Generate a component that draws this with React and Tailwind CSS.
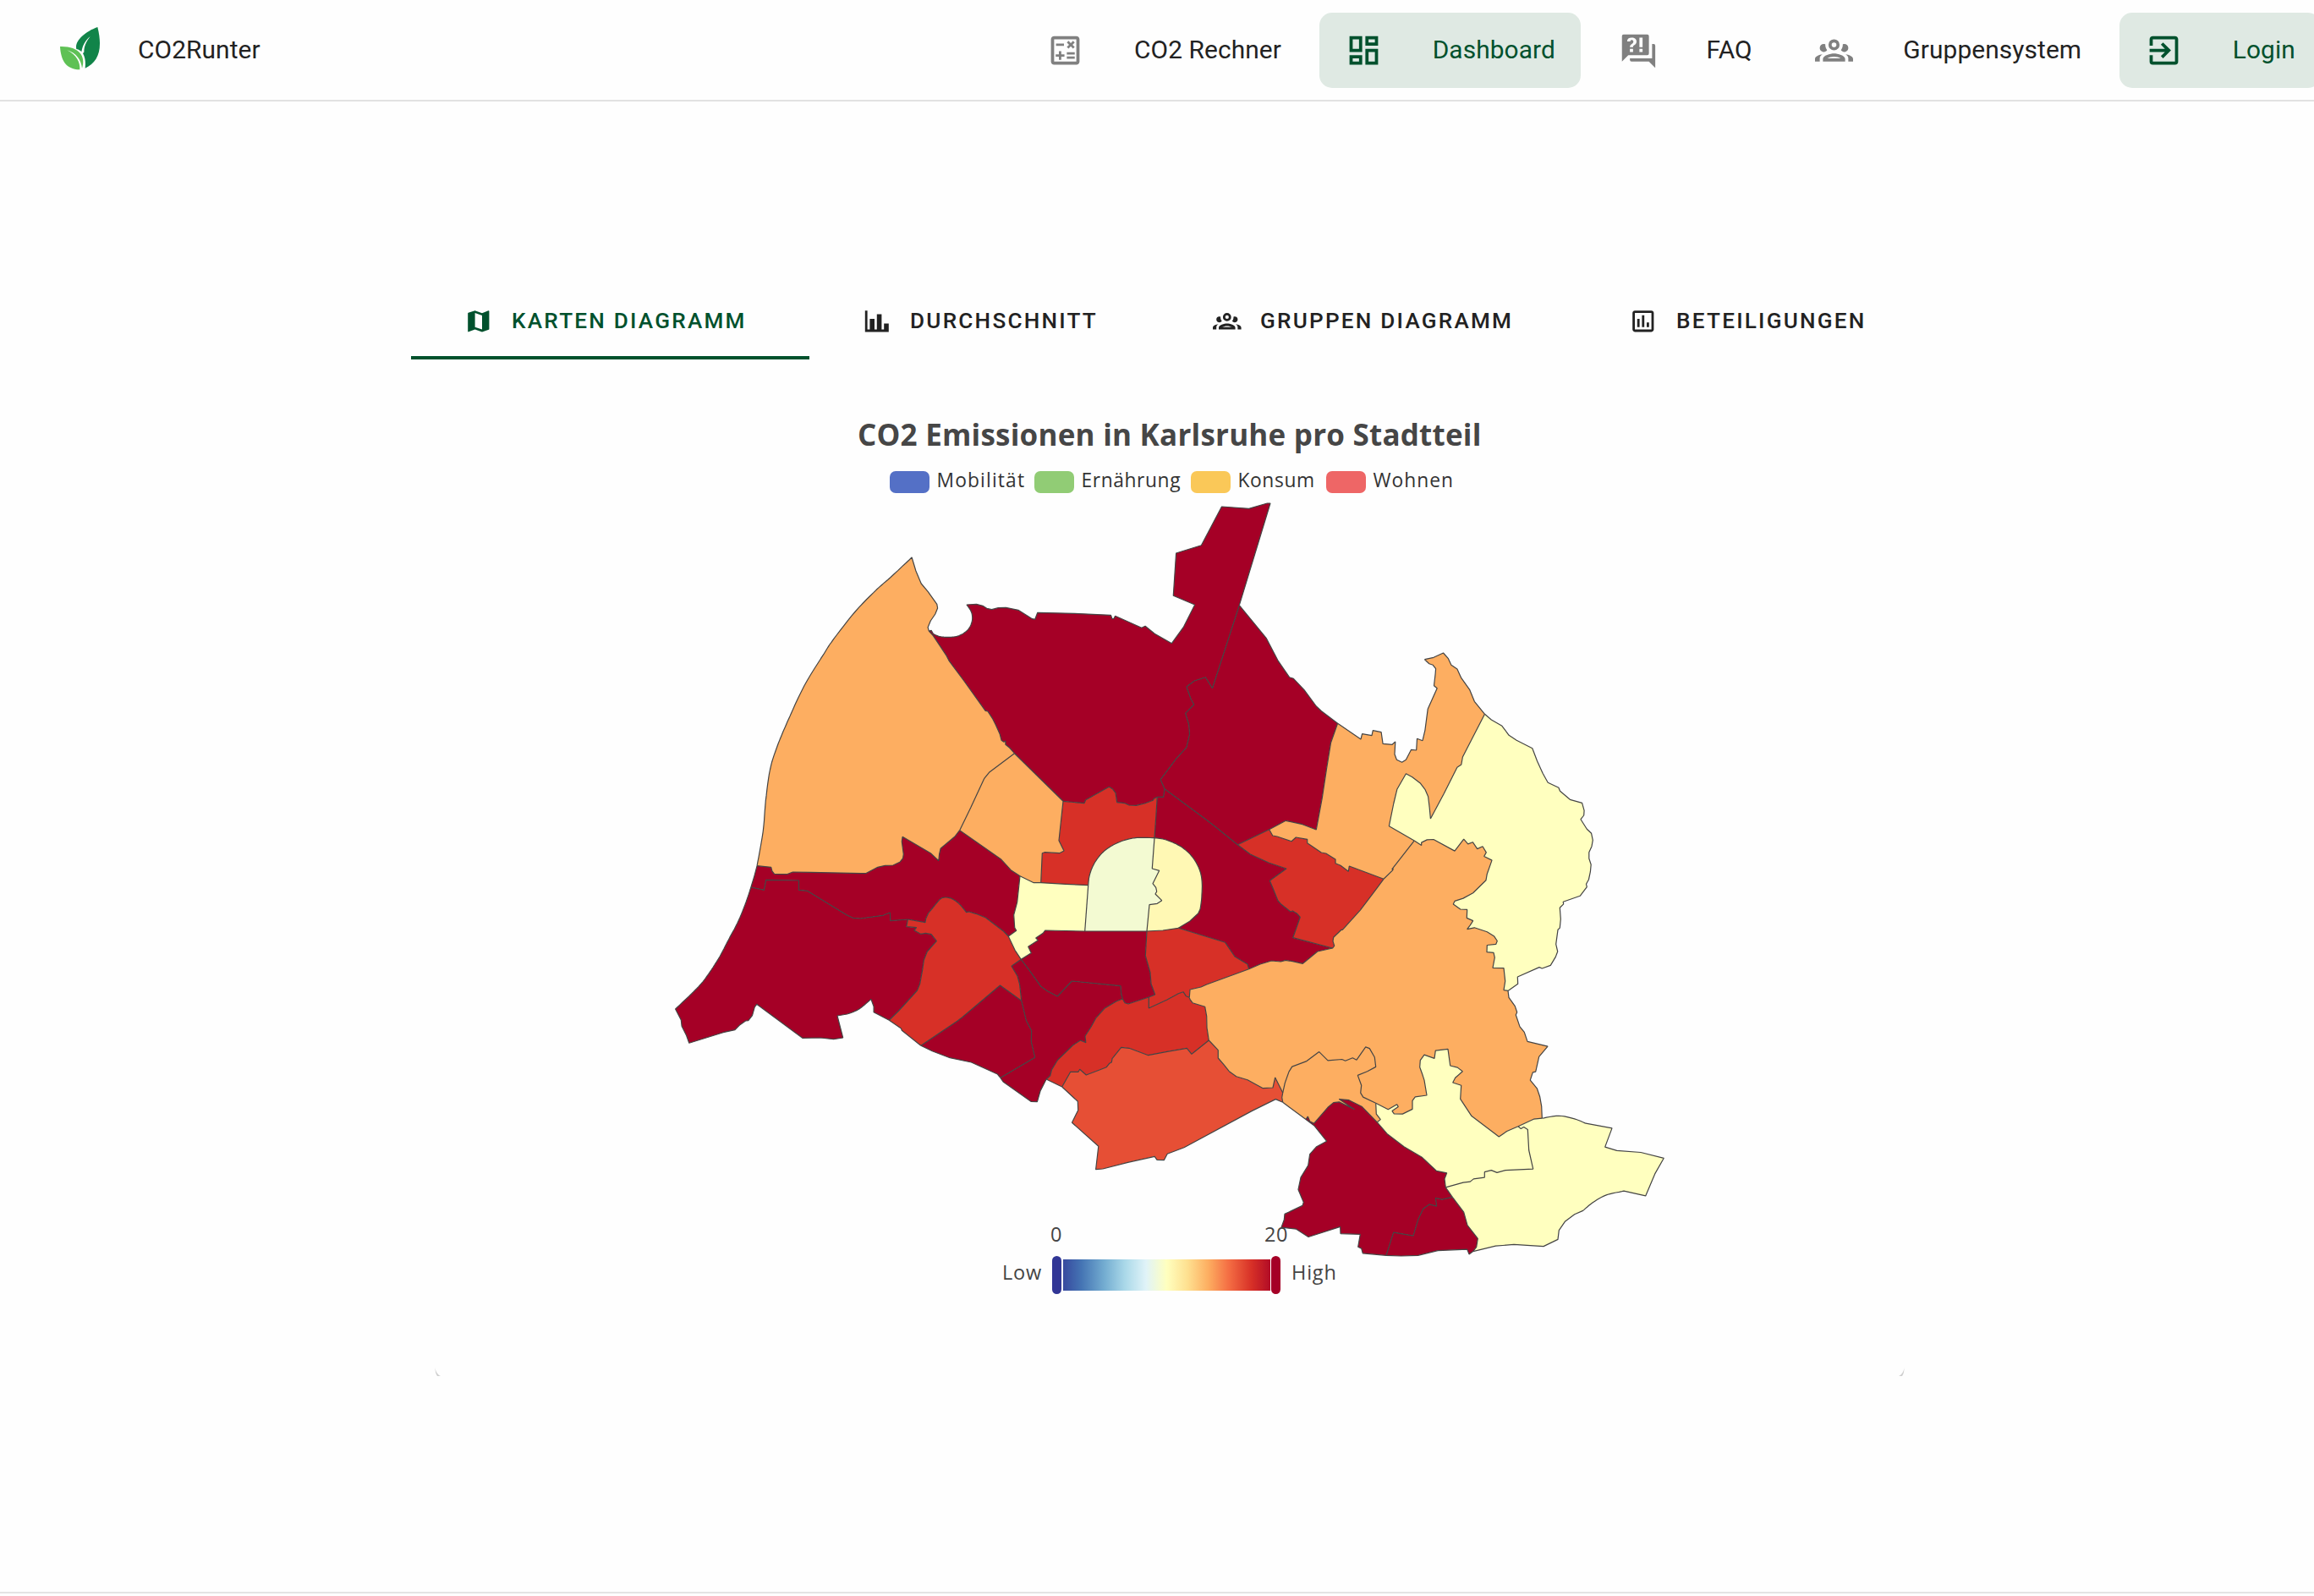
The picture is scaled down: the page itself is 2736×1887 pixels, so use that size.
import React from "react";

const ICONS = {
  calculator:
    "M19,3H5C3.9,3 3,3.9 3,5V19C3,20.1 3.9,21 5,21H19C20.1,21 21,20.1 21,19V5C21,3.9 20.1,3 19,3M19,19H5V5H19V19M6.2,7.7H11.2V9.2H6.2V7.7M13,15.8H18V17.3H13V15.8M13,13.2H18V14.7H13V13.2M8,18H9.5V16H11.5V14.5H9.5V12.5H8V14.5H6V16H8V18M14.1,10.9L15.5,9.5L16.9,10.9L18,9.9L16.6,8.5L18,7.1L16.9,6L15.5,7.4L14.1,6L13,7.1L14.4,8.5L13,9.9L14.1,10.9Z",
  dashboard:
    "M19,5V7H15V5H19M9,5V11H5V5H9M19,13V19H15V13H19M9,17V19H5V17H9M21,3H13V9H21V3M11,3H3V13H11V3M21,11H13V21H21V11M11,15H3V21H11V15Z",
  faq: "M18,15H6L2,19V3A1,1 0 0,1 3,2H18A1,1 0 0,1 19,3V14A1,1 0 0,1 18,15M23,9V23L19,19H8A1,1 0 0,1 7,18V17H21V8H22A1,1 0 0,1 23,9M8.19,4C7.32,4 6.62,4.2 6.08,4.59C5.56,5 5.3,5.57 5.31,6.36L5.32,6.39H7.25C7.26,6.09 7.35,5.86 7.53,5.7C7.71,5.55 7.93,5.47 8.19,5.47C8.5,5.47 8.76,5.57 8.94,5.75C9.12,5.94 9.2,6.2 9.2,6.5C9.2,6.82 9.13,7.09 8.97,7.32C8.83,7.55 8.62,7.75 8.36,7.91C7.85,8.25 7.5,8.55 7.31,8.82C7.11,9.08 7,9.5 7,10H9C9,9.69 9.04,9.44 9.13,9.26C9.22,9.08 9.39,8.9 9.64,8.74C10.09,8.5 10.46,8.21 10.75,7.81C11.04,7.41 11.19,7 11.19,6.5C11.19,5.74 10.92,5.13 10.38,4.68C9.85,4.23 9.12,4 8.19,4M7,11V13H9V11H7M13,13H15V11H13V13M13,4V10H15V4H13Z",
  group:
    "M12,5A3.5,3.5 0 0,0 8.5,8.5A3.5,3.5 0 0,0 12,12A3.5,3.5 0 0,0 15.5,8.5A3.5,3.5 0 0,0 12,5M12,7A1.5,1.5 0 0,1 13.5,8.5A1.5,1.5 0 0,1 12,10A1.5,1.5 0 0,1 10.5,8.5A1.5,1.5 0 0,1 12,7M5.5,8A2.5,2.5 0 0,0 3,10.5C3,11.44 3.53,12.25 4.29,12.68C4.65,12.88 5.06,13 5.5,13C5.94,13 6.35,12.88 6.71,12.68C7.08,12.47 7.39,12.17 7.62,11.81C6.89,10.86 6.5,9.7 6.5,8.5C6.5,8.41 6.5,8.31 6.5,8.22C6.2,8.08 5.86,8 5.5,8M18.5,8C18.14,8 17.8,8.08 17.5,8.22C17.5,8.31 17.5,8.41 17.5,8.5C17.5,9.7 17.11,10.86 16.38,11.81C16.5,12 16.63,12.15 16.78,12.3C16.94,12.45 17.1,12.58 17.29,12.68C17.65,12.88 18.06,13 18.5,13C18.94,13 19.35,12.88 19.71,12.68C20.47,12.25 21,11.44 21,10.5A2.5,2.5 0 0,0 18.5,8M12,14C9.66,14 5,15.17 5,17.5V19H19V17.5C19,15.17 14.34,14 12,14M4.71,14.55C2.78,14.78 0,15.76 0,17.5V19H3V17.07C3,16.06 3.69,15.22 4.71,14.55M19.29,14.55C20.31,15.22 21,16.06 21,17.07V19H24V17.5C24,15.76 21.22,14.78 19.29,14.55M12,16C13.53,16 15.24,16.5 16.23,17H7.77C8.76,16.5 10.47,16 12,16Z",
  login:
    "M19,3H5C3.89,3 3,3.89 3,5V9H5V5H19V19H5V15H3V19A2,2 0 0,0 5,21H19A2,2 0 0,0 21,19V5C21,3.89 20.1,3 19,3M10.08,15.58L11.5,17L16.5,12L11.5,7L10.08,8.41L12.67,11H3V13H12.67L10.08,15.58Z",
  map: "M15,19L9,16.89V5L15,7.11M20.5,3C20.44,3 20.39,3 20.34,3L15,5.1L9,3L3.36,4.9C3.15,4.97 3,5.15 3,5.38V20.5A0.5,0.5 0 0,0 3.5,21C3.55,21 3.61,21 3.66,20.97L9,18.9L15,21L20.64,19.1C20.85,19 21,18.85 21,18.62V3.5A0.5,0.5 0 0,0 20.5,3Z",
  bars: "M22,21H2V3H4V19H6V10H10V19H12V6H16V19H18V14H22V21Z",
  poll: "M9 17H7V10H9V17M13 17H11V7H13V17M17 17H15V13H17V17M19 19H5V5H19V19.1M19 3H5C3.9 3 3 3.9 3 5V19C3 20.1 3.9 21 5 21H19C20.1 21 21 20.1 21 19V5C21 3.9 20.1 3 19 3Z",
};

function Icon({ name, className }) {
  return (
    <svg viewBox="0 0 24 24" fill="currentColor" className={className}>
      <path d={ICONS[name]} />
    </svg>
  );
}

function Logo() {
  return (
    <svg viewBox="210 90 150 162" className="mb-[5px] h-[54px] w-[50px]">
      <path
        fill="#118449"
        d="M346 96C300 113 264 146 271 174C280 176 286 180 289 184C293 160 303 143 320 129C305 149 298 165 298 185L294 189C303 205 304 222 302 242C348 222 366 176 346 96Z"
      />
      <path
        fill="#5fc155"
        d="M213 165C216 212 232 246 283 247C285 222 272 195 238 178C270 188 288 212 291 242C306 200 280 163 213 165Z"
      />
    </svg>
  );
}

/* Map sheets: origin x, origin y, units per pixel in x and y. */
const SHEETS = {
  N: [780, 580, 2.529, 3],
  O: [1340, 580, 2.45, 3],
  W: [780, 960, 2.529, 3],
  C: [1180, 900, 3, 3],
  E: [1480, 960, 3, 2.8],
};

/*
 * Borders shared by districts. A letter switches the sheet of the points
 * after it; points between "(" and ")" are joined by a smooth curve.
 */
const ARCS = {
  a1: "N ( 291,1331 309,1210 317,1100 330,990 350,912 382,820 432,693 490,581 520,527 585,429 648,352 690,308 754,237 ) 766,285 782,330 802,358 829,403 831,417 824,438 810,462 802,485 805,498",
  a2: "N 805,498 818,515 856,583 866,605 910,675 974,781 981,783 995,808 1005,832 1017,863 1022,886 1029,892 1034,888 1034,901 1046,912 1061,932",
  a3: "N 805,498 812,496 ( 818,508 835,517 858,520 885,518 905,509 922,493 932,472 935,450 931,428 918,405 ) 947,403 966,409 978,418 993,422 1012,416 1035,415 1072,424 1098,443 1112,454 1122,457 1130,433 1240,436 1349,442 1353,455 1358,454 1362,445 1441,487 1452,481 1480,508 1531,542 O 145,485 178,405 116,373 124,222 197,194 256,57 335,64 388,45 397,45 307,407",
  a4: "O 307,407 229,701 209,662 177,675 154,696 167,740 176,759 151,790 161,830 163,865 154,911 125,950 79,1025 C 591,98",
  a5: "C 591,98 587,127 565,127",
  a6: "C 565,127 553,133 550,139 520,150 490,157 465,156 450,149 422,146 417,112 406,98 394,91 311,137 306,149 231,142",
  a7: "C 231,142 N 1061,932",
  a8: "N 1061,932 985,1000 970,1022 930,1125 897,1205",
  a9: "N 897,1205 882,1228 840,1270 836,1290 834,1313 810,1286 726,1228 724,1245 729,1290 727,1305 718,1318 698,1329 674,1330 652,1336 616,1358 450,1354 398,1353 380,1361 343,1360 336,1350 333,1336 291,1331",
  a10: "N 897,1205 1020,1307 1050,1346 C 78,407",
  a11: "C 78,407 127,431 152,431",
  a12: "C 152,431 157,326 165,323 218,326 234,318 216,281 231,142",
  a13: "C 152,431 240,436 320,440",
  a14: "C ( 320,440 323,412 331,385 343,360 359,337 380,316 405,299 435,285 468,275 500,271 555,272 )",
  a15: "C 555,272 560,200 565,127",
  a16: "C 555,272 547,381 572,388 549,434 560,448 563,462 558,471 581,494 565,505 537,509 528,603",
  a17: "C ( 555,272 585,276 620,288 655,307 685,334 706,365 719,398 724,435 722,490 717,525 ) 710,540 680,568 640,592",
  a18: "C 640,592 585,600 528,603",
  a19: "C 528,603 308,603",
  a20: "C 308,603 320,440",
  a21: "C 308,603 167,600 160,610 134,627 142,635 107,658 118,680 82,703",
  a22: "C 82,703 60,670 37,621",
  a23: "C 37,621 65,601 59,590 56,545 68,500 78,407",
  a24: "C 37,621 W 1028,423 975,375 945,361 925,354 917,356 ( 905,338 890,320 872,307 855,303 840,308 822,332 803,360 ) 796,378 794,392 742,381",
  a25: "W 742,381 690,386 689,357 668,367 600,378 578,376 560,366 441,280 416,277 416,243 318,241 312,277 273,267",
  a26: "W 273,267 282,232 N 291,1331",
  a27: "W ( 273,267 255,330 232,395 205,455 180,512 150,568 125,608 95,645 47,699 ) 64,738 66,760 80,793 88,820 190,782 225,773 240,755 257,741 265,740 277,722 284,692 290,682 427,802 480,801 520,806 548,801 531,723 ( 560,717 577,710 600,696 632,664 ) 640,690 640,710 686,739",
  a28: "W 742,381 738,407 768,410 761,420 780,433 795,430 812,434 828,458 800,495 790,525 785,565 778,610 770,633 715,705 686,739",
  a29: "W 686,739 722,768 724,775 781,829",
  a30: "W 781,829 890,742 905,728 1018,615 1082,670",
  a31: "W 1082,670 1076,610 1070,583 1052,547 C 82,703",
  a32: "W 1082,670 1096,740 1112,776 1111,815 1122,871 1019,943",
  a33: "W 781,829 815,848 868,872 932,888 1010,930 1019,943",
  a34: "W 1019,943 1027,957 1110,1027 1129,1028 1138,990 1156,948",
  a35: "W 1156,948 1168,935 1172,915 1190,880 1235,828 1258,810 1274,818 1272,795 1290,762 1305,730 1330,697 1365,672 C 442,843",
  a36: "C 82,703 110,740 152,799 175,815 211,834 262,780 435,797 437,825 442,843",
  a37: "C 442,843 450,857 462,861 535,837",
  a38: "C 535,837 557,828 543,790 540,750 523,690 528,603",
  a39: "C 535,837 535,876 600,846 640,824 657,818 667,833 679,838",
  a40: "C 679,838 681,810 720,801 740,792 890,737",
  a41: "C 890,737 885,720 840,693 806,643 640,592",
  a42: "C 890,737 930,720 970,708 1003,711 1020,706 1045,710 1081,718 1105,698 1133,675 1187,663",
  a43: "C 1187,663 1046,626 1072,553 1060,540 1045,531 1038,534 1005,508 993,495 975,450 964,424 1023,381 960,360 895,330 850,296",
  a44: "C 850,296 770,232 735,205 591,98",
  a45: "C 850,296 962,242",
  a46: "C 962,242 1021,211 1080,224 1129,243 O 547,1090 560,985 572,895 592,826",
  a47: "C 962,242 974,264 990,267 1041,284 1057,270 1097,277 1097,290 1147,324 1163,327 1197,348 1197,362 1215,370 1243,391 1246,372 E 468,222",
  a48: "E 468,222 430,270 385,325 322,390 318,390 290,415 288,428 293,443 C 1187,663",
  a49: "E 468,222 500,193 502,187 497,190 577,95",
  a50: "E 577,95 O 741,1190 754,1110 764,1060 790,1004 808,1016 832,1039 845,1060 854,1085 858,1125 861,1164 900,1075 938,982 950,972 954,945 1018,793",
  a51: "O 307,407 385,523 420,605 452,662 464,667 495,707 530,765 545,782 592,826",
  a52: "O 592,826 659,882 663,863 691,869 694,851 718,857 723,898 750,901 759,891 757,935 763,955 778,964 790,955 805,919 820,921 822,880 838,887 845,850 853,775 880,701 871,692 875,650 876,632 868,619 857,614 844,599 870,592 898,576 912,595 921,619 938,633 950,665 974,706 988,748 1018,793",
  a53: "O 1018,793 1037,813 1068,835 1088,868 1110,886 1156,914 1170,960 1186,1003 1201,1036 1232,1054 1236,1066 1265,1096 1300,1108 1306,1135 1305,1152 1296,1166 1314,1201 1327,1216 1331,1240 1328,1262 1320,1283 1320,1305 1326,1327 1324,1352 1319,1380 1312,1396 1314,1406 1294,1438 1245,1459 E 1106,305 1093,317 1096,355 1093,384 1086,390 1079,438 1085,462 1078,480 1060,508 1030,518 1020,514 943,546 944,569 909,592",
  a54: "E 577,95 602,111 602,101 622,92 645,91 720,129 752,90 767,106 784,100 800,122 819,114 832,134 824,147 852,160 835,205 831,226 785,268 750,286 720,295 715,305 740,322 764,323 763,351 785,360 775,375 764,388 790,383 835,397 860,412 871,427 866,438 835,441 834,464 858,466 862,482 855,516 894,517 899,560 894,590 909,592",
  a55: "E 909,592 912,614 934,643 941,663 937,672 951,711 967,729 978,760 1050,776 1019,810 1007,860 997,862 988,888 1012,915 1022,943 1028,975 1030,1014",
  a56: "E 1030,1014 1000,1017 945,1041",
  a57: "E 945,1041 905,1057 877,1075 780,1007 740,950 743,905 713,896 722,880 748,859 730,846 704,840 696,785 652,790 648,816 612,804 598,822 596,845 605,868 612,888 621,938 580,943 570,956 570,984 535,1000 505,999 498,990 520,976 515,968 484,985 440,964",
  a58: "E 440,964 395,944 386,930 389,905 376,872 410,859 440,844 436,812 418,783 404,778 372,821 358,814 332,824 320,819 270,823 239,794 195,825 143,843 132,860 118,897 110,930",
  a59: "E 110,930 C 983,1122 975,1158 940,1160 885,1130 845,1118 820,1100 800,1075 781,1053 781,1025 748,990",
  a60: "C 748,990 741,945 740,905 734,871 690,857 681,845 679,838",
  a61: "C 748,990 687,1039 670,1018 600,1030 533,1043 465,1018 437,1015 405,1055 403,1068 395,1072 385,1085 360,1095 313,1113 290,1093 285,1102 257,1102 W 1203,975",
  a62: "W 1156,948 1203,975",
  a63: "W 1203,975 1250,1027 1251,1058 1233,1102 1312,1186 1304,1268 1325,1266 1400,1243 1480,1222 1487,1234 1508,1235 1518,1213 1568,1190 E 0,990 85,951 110,961",
  a64: "E 110,961 107,945 110,930",
  a65: "E 110,961 192,1018",
  a66: "E 192,1018 199,1008 206,1024 221,1031 270,978 290,962 310,960 365,985 310,951 345,954 390,975 445,1027",
  a67: "E 445,1027 457,1018 442,1000 440,964",
  a68: "E 445,1027 480,1065 540,1108 605,1144 655,1188 692,1195 684,1215 688,1243",
  a69: "E 945,1041 955,1049 965,1043 979,1051 983,1120 998,1182 900,1186 870,1194 850,1186 826,1192 826,1210 787,1215 775,1224 750,1227 688,1243",
  a70: "E 688,1243 712,1275",
  a71: "E 712,1275 752,1325 765,1368 802,1412 797,1440 785,1455",
  a72: "E ( 1030,1014 1090,1006 1145,1016 1185,1031 ) 1278,1047 1253,1109 1295,1121 1380,1127 1462,1146 1430,1198 1397,1271 ( 1320,1255 1258,1268 1210,1293 1175,1320 ) 1145,1332 1112,1355 1090,1385 1086,1415 1035,1438 930,1432 865,1437 785,1455",
  a73: "E 712,1275 675,1283 652,1278 656,1305 630,1299 608,1314 590,1350 573,1403 503,1392 477,1468",
  a74: "E 785,1455 771,1464 764,1448 660,1452 590,1468 530,1470 477,1468",
  a75: "E 192,1018 221,1038 266,1090 230,1108 206,1133 200,1170 174,1210 165,1250 184,1292 180,1303 117,1331 115,1350 105,1375 158,1381 201,1407 314,1373 315,1396 385,1398 377,1440 389,1445 394,1461 477,1468",
};

/* Districts as closed chains of arcs; a leading "-" walks an arc backwards. */
const DISTRICTS = [
  ["#fdae61", "a1 a2 a8 a9"],
  ["#fdae61", "-a8 -a7 -a12 -a11 -a10"],
  ["#a50026", "a3 a4 a5 a6 a7 -a2"],
  ["#a50026", "a51 -a46 -a45 a44 -a4"],
  ["#a50026", "-a9 a10 -a23 a24 a25 a26"],
  ["#a50026", "-a25 a28 -a27"],
  ["#d73027", "a28 a29 a30 a31 a22 a24"],
  ["#a50026", "-a30 a33 -a32"],
  ["#a50026", "a32 a34 a35 -a36 -a31"],
  ["#a50026", "a21 a36 a37 a38 a19"],
  ["#ffffbf", "a11 a13 -a20 a21 a22 a23"],
  ["#f3fad2", "a14 a16 a19 a20"],
  ["#fff8b4", "a17 a18 -a16"],
  ["#d73027", "a12 -a6 -a15 -a14 -a13"],
  ["#a50026", "-a44 -a43 -a42 a41 -a17 a15 -a5"],
  ["#d73027", "-a18 -a41 -a40 -a39 a38"],
  ["#d73027", "-a35 a62 -a61 a60 -a39 -a37"],
  ["#e64f35", "a61 a63 a64 a59"],
  ["#d73027", "a45 a47 a48 a43"],
  ["#fdae61", "a46 a52 -a50 -a49 -a47"],
  ["#ffffbf", "a50 a53 -a54"],
  ["#fdae61", "a54 a55 a56 a57 a58 a59 a60 a40 a42 -a48 a49"],
  ["#fdae61", "-a58 -a67 -a66 -a65 a64"],
  ["#a50026", "a66 a68 a70 a73 -a75"],
  ["#a50026", "a71 a74 -a73"],
  ["#ffffbf", "a57 -a67 a68 -a69"],
  ["#ffffbf", "-a56 a72 -a71 -a70 -a69"],
];

/* Catmull-Rom subdivision of a run of points. */
function smooth(run) {
  const out = [];
  for (let i = 0; i < run.length - 1; i++) {
    const p0 = run[Math.max(i - 1, 0)];
    const p1 = run[i];
    const p2 = run[i + 1];
    const p3 = run[Math.min(i + 2, run.length - 1)];
    for (let step = 0; step < 6; step++) {
      const t = step / 6;
      out.push(
        [0, 1].map(
          (k) =>
            0.5 *
            (2 * p1[k] +
              (p2[k] - p0[k]) * t +
              (2 * p0[k] - 5 * p1[k] + 4 * p2[k] - p3[k]) * t * t +
              (3 * p1[k] - p0[k] - 3 * p2[k] + p3[k]) * t * t * t)
        )
      );
    }
  }
  out.push(run[run.length - 1]);
  return out;
}

function arcPoints(source) {
  let sheet = SHEETS.N;
  let run = null;
  const points = [];
  for (const token of source.split(" ")) {
    if (SHEETS[token]) {
      sheet = SHEETS[token];
    } else if (token === "(") {
      run = [];
    } else if (token === ")") {
      points.push(...smooth(run));
      run = null;
    } else {
      const [x, y] = token.split(",").map(Number);
      (run || points).push([sheet[0] + x / sheet[2], sheet[1] + y / sheet[3]]);
    }
  }
  return points.map(([x, y]) => `${x.toFixed(1)},${y.toFixed(1)}`);
}

function districtPath(chain) {
  const points = chain.split(" ").flatMap((name) => {
    if (name[0] === "-") return arcPoints(ARCS[name.slice(1)]).reverse();
    return arcPoints(ARCS[name]);
  });
  return `M${points.join("L")}Z`;
}

function DistrictMap() {
  return (
    <svg viewBox="790 590 1190 900" className="ml-[790px] h-[900px] w-[1190px]">
      {DISTRICTS.map(([color, chain]) => (
        <path key={chain} d={districtPath(chain)} fill={color} />
      ))}
      <g fill="none" stroke="#444444" strokeWidth="1.2" strokeLinejoin="bevel">
        {Object.entries(ARCS).map(([name, source]) => (
          <path key={name} d={`M${arcPoints(source).join("L")}`} />
        ))}
      </g>
    </svg>
  );
}

const NAV = [
  { icon: "calculator", label: "CO2 Rechner" },
  { icon: "dashboard", label: "Dashboard", active: true },
  { icon: "faq", label: "FAQ" },
  { icon: "group", label: "Gruppensystem" },
  { icon: "login", label: "Login", active: true },
];

function Header() {
  return (
    <header className="flex h-[120px] items-center overflow-hidden border-b-2 border-[#e2e2e2] text-[29.87px] text-[#222222]">
      <div className="flex w-[1207px] shrink-0 items-center pl-[70px]">
        <Logo />
        <span className="ml-[43px] tracking-[0.1px]">CO2Runter</span>
      </div>
      <nav className="flex shrink-0 gap-[14.6px]">
        {NAV.map((item) => (
          <a
            key={item.label}
            className={
              item.active
                ? "flex h-[89px] items-center rounded-[15px] bg-[#dfe9e3] px-[30px] text-[#00512d]"
                : "flex h-[89px] items-center px-[30px]"
            }
          >
            <Icon
              name={item.icon}
              className={item.active ? "size-[45px]" : "size-[45px] text-[#808080]"}
            />
            <span className="ml-[59px] tracking-[0.1px] whitespace-nowrap">{item.label}</span>
          </a>
        ))}
      </nav>
    </header>
  );
}

const TABS = [
  { icon: "map", label: "KARTEN DIAGRAMM", box: "w-[471px] border-[#00512d] text-[#00512d]" },
  { icon: "bars", label: "DURCHSCHNITT", box: "w-[414px] border-transparent text-[#222222]" },
  { icon: "group", label: "GRUPPEN DIAGRAMM", box: "w-[492px] border-transparent text-[#222222]" },
  { icon: "poll", label: "BETEILIGUNGEN", box: "w-[418px] border-transparent text-[#222222]" },
];

function Tabs() {
  return (
    <div className="mt-[215px] ml-[486px] flex">
      {TABS.map((tab) => (
        <div
          key={tab.label}
          className={`flex h-[90px] items-center border-b-4 pt-[4px] pl-[63px] text-[26.13px] font-medium tracking-[2.22px] ${tab.box}`}
        >
          <Icon name={tab.icon} className="size-[33.6px] shrink-0" />
          <span className="ml-[22.5px] whitespace-nowrap">{tab.label}</span>
        </div>
      ))}
    </div>
  );
}

const LEGEND = [
  { label: "Mobilität", swatch: "bg-[#5470c6]", box: "w-[171px] tracking-[1.15px]" },
  { label: "Ernährung", swatch: "bg-[#91cc75]", box: "w-[185px] tracking-[0.6px]" },
  { label: "Konsum", swatch: "bg-[#fac858]", box: "w-[160px] tracking-[0.6px]" },
  { label: "Wohnen", swatch: "bg-[#ee6666]", box: "w-[160px] tracking-[1px]" },
];

function Legend() {
  return (
    <div className="ml-[1052px] flex h-[34px] text-[22.8px] text-[#333333]">
      {LEGEND.map((entry) => (
        <div key={entry.label} className={`flex items-center ${entry.box}`}>
          <span className={`mt-[4px] h-[26px] w-[46.5px] shrink-0 rounded-[7px] ${entry.swatch}`} />
          <span className="ml-[9px] leading-[30px] whitespace-nowrap">{entry.label}</span>
        </div>
      ))}
    </div>
  );
}

function VisualMap() {
  return (
    <div className="-mt-[46px] ml-[1185px] text-[23.5px] text-[#444444]">
      <div className="flex leading-[30px]">
        <span className="w-[254px] pl-[57px] tracking-[0.6px]">0</span>
        <span className="ml-[56px] tracking-[0.6px]">20</span>
      </div>
      <div className="mt-[10.5px] flex items-center">
        <span className="w-[59px] pb-[6px] leading-[38px] tracking-[0.8px]">Low</span>
        <span className="h-[45px] w-[11px] rounded-full bg-[#313695]" />
        <span className="mx-[1.5px] h-[37px] w-[245px] bg-[linear-gradient(to_right,#313695_-4%,#4575b4_9%,#74add1_20%,#abd9e9_30%,#e0f3f8_40%,#ffffbf_50%,#fee090_60%,#fdae61_70%,#f46d43_80%,#d73027_91%,#a50026_103%)]" />
        <span className="h-[45px] w-[11px] rounded-full bg-[#a50026]" />
        <span className="ml-[13px] pb-[6px] leading-[38px] tracking-[0.8px]">High</span>
      </div>
    </div>
  );
}

function CardCorners() {
  return (
    <div className="ml-[514px] flex h-[10px] w-[1738px] justify-between">
      <svg viewBox="0 0 8 10" className="h-[10px] w-[8px]" fill="#cfcfcf">
        <path d="M0.5 0C1 4 3 8 7 10H3C1 7 0.5 4 0.5 0Z" />
      </svg>
      <svg viewBox="0 0 8 10" className="h-[10px] w-[8px]" fill="#cfcfcf">
        <path d="M7.5 0C7 4 5 8 1 10H5C7 7 7.5 4 7.5 0Z" />
      </svg>
    </div>
  );
}

export default function App() {
  return (
    <div className="h-[1887px] w-[2736px] overflow-hidden bg-[#fefefe] font-['Roboto',sans-serif]">
      <Header />
      <Tabs />
      <main className="font-['Open_Sans',sans-serif]">
        <h1 className="mt-[64px] ml-[1014px] h-[50px] text-[35px] leading-[50px] font-bold tracking-[0.22px] whitespace-nowrap text-[#464646]">
          CO2 Emissionen in Karlsruhe pro Stadtteil
        </h1>
        <div className="mt-[12px]">
          <Legend />
        </div>
        <div className="mt-[5px]">
          <DistrictMap />
        </div>
        <VisualMap />
        <div className="mt-[87px]">
          <CardCorners />
        </div>
      </main>
      <footer className="mt-[255px] border-t-2 border-[#e4e4e4]" />
    </div>
  );
}
